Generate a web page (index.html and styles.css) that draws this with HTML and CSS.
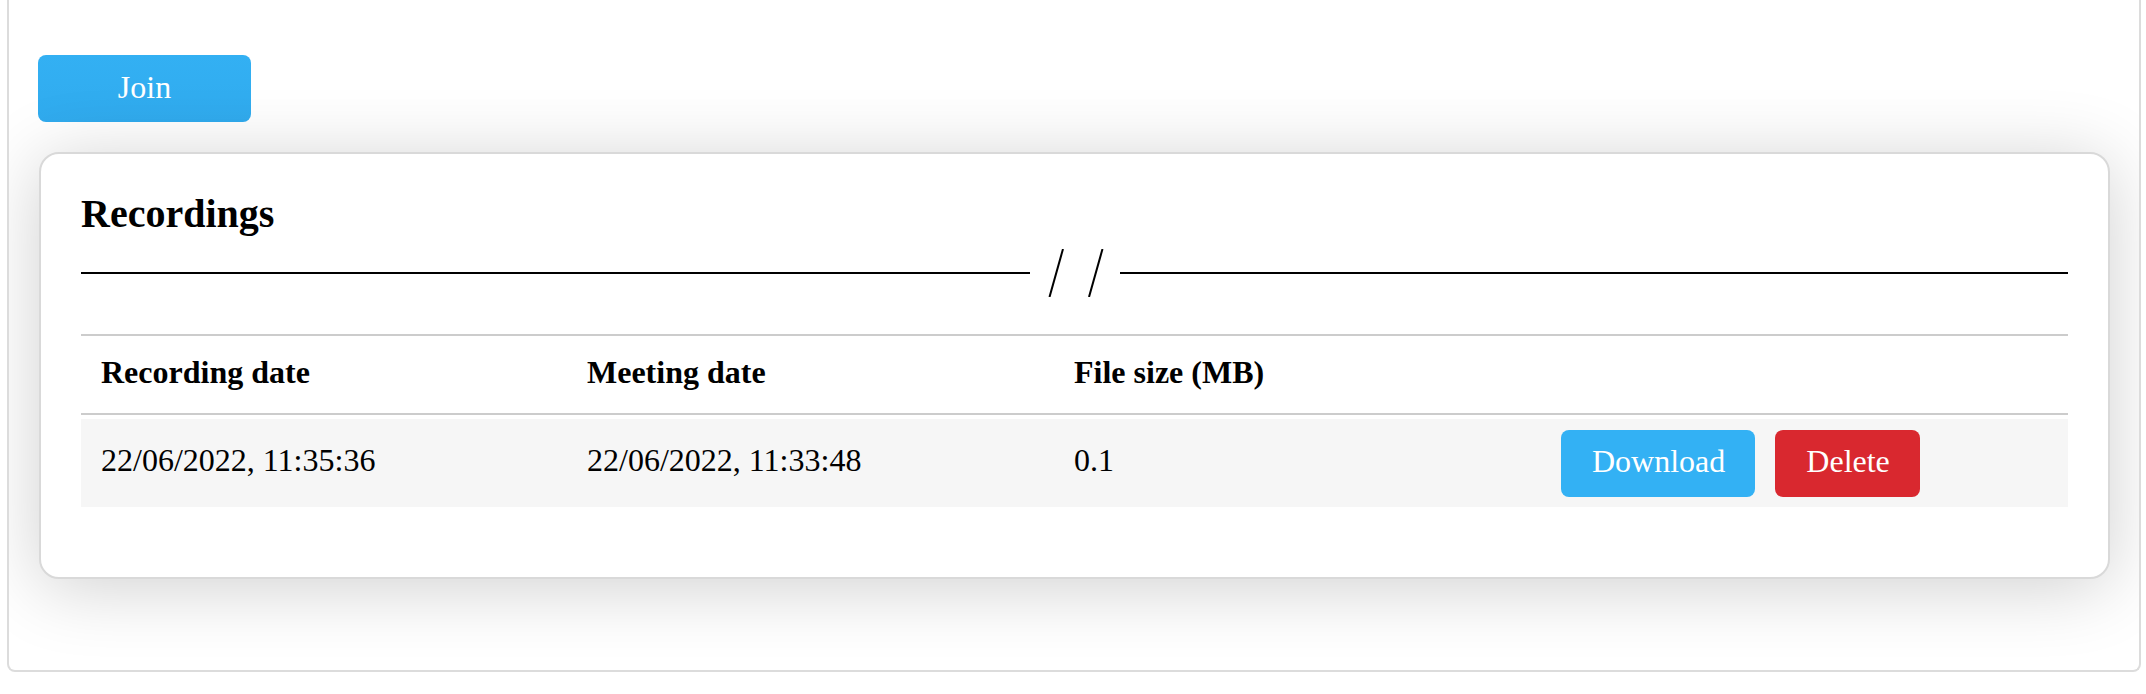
FILE: index.html
```html
<!DOCTYPE html>
<html lang="en">
<head>
<meta charset="utf-8">
<title>Recordings</title>
<link rel="stylesheet" href="styles.css">
</head>
<body>
<div class="panel">
  <button class="btn btn-join">Join</button>
  <section class="card">
    <h3 class="card-title">Recordings</h3>
    <div class="divider">
      <span class="divider-line"></span>
      <svg class="divider-mark" width="90" height="48" viewBox="0 0 90 48">
        <line x1="33" y1="0" x2="19.5" y2="48" stroke="#000" stroke-width="2"/>
        <line x1="72.5" y1="0" x2="59" y2="48" stroke="#000" stroke-width="2"/>
      </svg>
      <span class="divider-line"></span>
    </div>
    <table class="rec-table">
      <colgroup>
        <col class="c1"><col class="c2"><col class="c3"><col class="c4">
      </colgroup>
      <thead>
        <tr>
          <th>Recording date</th>
          <th>Meeting date</th>
          <th>File size (MB)</th>
          <th></th>
        </tr>
      </thead>
      <tbody>
        <tr>
          <td>22/06/2022, 11:35:36</td>
          <td>22/06/2022, 11:33:48</td>
          <td>0.1</td>
          <td>
            <div class="actions">
              <button class="btn btn-download">Download</button>
              <button class="btn btn-delete">Delete</button>
            </div>
          </td>
        </tr>
      </tbody>
    </table>
  </section>
</div>
</body>
</html>
```
FILE: styles.css
```css
html, body {
  margin: 0;
  padding: 0;
  background: #fff;
}
body {
  font-family: "Liberation Serif", "Times New Roman", serif;
  font-size: 32px;
  color: #000;
}
.panel {
  margin: 0 5px 0 7px;
  border: 2px solid #dcdcdc;
  border-top: 0;
  border-radius: 0 0 8px 8px;
  padding: 55px 29px 91px 30px;
  overflow: hidden;
  display: flex;
  flex-direction: column;
  align-items: flex-start;
}
.btn {
  font-family: "Liberation Serif", "Times New Roman", serif;
  font-size: 32px;
  color: #fff;
  border: 0;
  border-radius: 8px;
  height: 67px;
  padding: 0 30px 4px;
  line-height: 40px;
  cursor: pointer;
}
.btn-join {
  width: 213px;
  margin-left: -1px;
  padding-bottom: 3px;
  background: linear-gradient(180deg, #33b0f3 0%, #30abee 100%);
}
.card {
  align-self: stretch;
  margin-top: 30px;
  background: #fff;
  border: 2px solid #d9d9d9;
  border-radius: 20px;
  padding: 38px 40px 70px 40px;
  box-shadow: 0 8px 72px rgba(0, 0, 0, 0.19);
}
.card-title {
  margin: 0;
  font-size: 40px;
  font-weight: bold;
  line-height: 44px;
}
.divider {
  display: flex;
  align-items: center;
  height: 48px;
  margin-top: 13px;
}
.divider-line {
  flex: 1;
  height: 2px;
  background: #000;
}
.divider-mark {
  display: block;
  flex: 0 0 90px;
}
.rec-table {
  margin-top: 37px;
  width: 100%;
  table-layout: fixed;
  border-collapse: separate;
  border-spacing: 0;
}
.c1 { width: 486px; }
.c2 { width: 487px; }
.c3 { width: 487px; }
.rec-table th {
  text-align: left;
  font-weight: bold;
  padding: 0 20px 4px;
  height: 73px;
  border-top: 2px solid #cccccc;
  border-bottom: 2px solid #cccccc;
  vertical-align: middle;
}
.rec-table td {
  padding: 0 20px 6px;
  height: 82px;
  border-top: 4px solid #fff;
  background: #f6f6f6;
  vertical-align: middle;
  white-space: nowrap;
}
.rec-table td .actions {
  margin-top: 6px;
}
.actions {
  display: flex;
  gap: 20px;
}
.btn-download {
  background: #33b1f4;
  padding: 0 30px 5px 31px;
}
.btn-delete {
  background: #d9282f;
  padding: 0 30px 5px 31px;
}
```
